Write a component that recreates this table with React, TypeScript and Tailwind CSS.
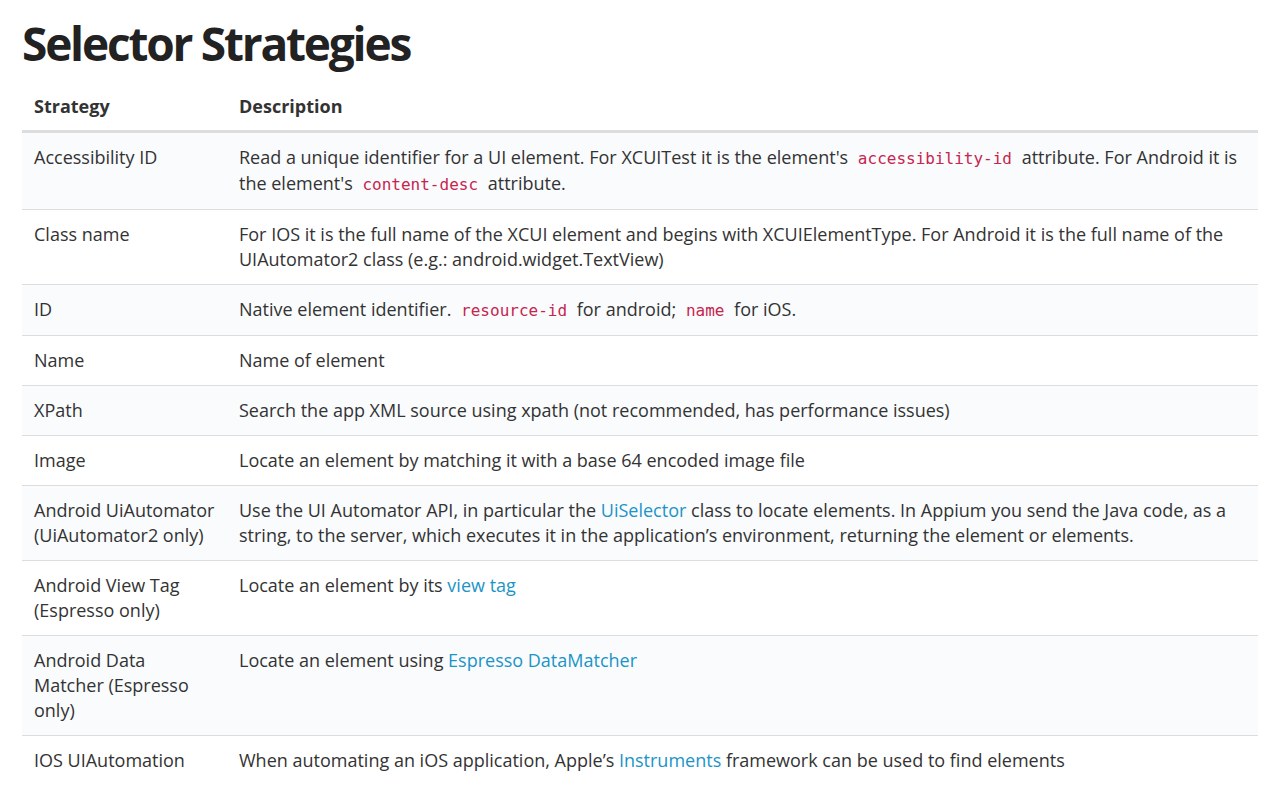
const rows: { name: string; desc: React.ReactNode }[] = [
  {
    name: "Accessibility ID",
    desc: (
      <>
        Read a unique identifier for a UI element. For XCUITest it is the element's{" "}
        <Code>accessibility-id</Code> attribute. For Android it is the element's{" "}
        <Code>content-desc</Code> attribute.
      </>
    ),
  },
  {
    name: "Class name",
    desc: "For IOS it is the full name of the XCUI element and begins with XCUIElementType. For Android it is the full name of the UIAutomator2 class (e.g.: android.widget.TextView)",
  },
  {
    name: "ID",
    desc: (
      <>
        Native element identifier. <Code>resource-id</Code> for android;{" "}
        <Code>name</Code> for iOS.
      </>
    ),
  },
  { name: "Name", desc: "Name of element" },
  {
    name: "XPath",
    desc: "Search the app XML source using xpath (not recommended, has performance issues)",
  },
  { name: "Image", desc: "Locate an element by matching it with a base 64 encoded image file" },
  {
    name: "Android UiAutomator (UiAutomator2 only)",
    desc: (
      <>
        Use the UI Automator API, in particular the <A>UiSelector</A> class to locate
        elements. In Appium you send the Java code, as a string, to the server, which
        executes it in the application’s environment, returning the element or elements.
      </>
    ),
  },
  {
    name: "Android View Tag (Espresso only)",
    desc: (
      <>
        Locate an element by its <A>view tag</A>
      </>
    ),
  },
  {
    name: "Android Data Matcher (Espresso only)",
    desc: (
      <>
        Locate an element using <A>Espresso DataMatcher</A>
      </>
    ),
  },
  {
    name: "IOS UIAutomation",
    desc: (
      <>
        When automating an iOS application, Apple’s <A>Instruments</A> framework can be
        used to find elements
      </>
    ),
  },
];

function Code({ children }: { children: React.ReactNode }) {
  return (
    <code className="px-[5px] font-['DejaVu_Sans_Mono',monospace] text-[16px] text-[#c7254e]">
      {children}
    </code>
  );
}

function A({ children }: { children: React.ReactNode }) {
  return <a className="text-[#1b94c7]">{children}</a>;
}

export default function App() {
  return (
    <div className="min-h-[799px] bg-white px-[22px] pt-[13px] font-['Open_Sans',sans-serif] text-[#333]">
      <h1 className="text-[46px] font-bold leading-[60px] tracking-[-2.2px] text-[#222]">
        Selector Strategies
      </h1>
      <table className="mt-[9px] w-[1236px] border-collapse text-[18px] leading-[25px]">
        <thead>
          <tr className="border-b-[3px] border-[#ddd]">
            <th className="w-[205px] px-3 pt-[12px] pb-[11px] text-left font-bold">Strategy</th>
            <th className="px-3 pt-[12px] pb-[11px] text-left font-bold">Description</th>
          </tr>
        </thead>
        <tbody>
          {rows.map((row, i) => (
            <tr
              key={row.name}
              className={
                i % 2 === 0
                  ? "border-b border-[#ddd] bg-[#f9fbfd]"
                  : "border-b border-[#ddd] bg-white last:border-0"
              }
            >
              <td className="px-3 py-3 align-top">{row.name}</td>
              <td className="px-3 py-3 align-top">{row.desc}</td>
            </tr>
          ))}
        </tbody>
      </table>
    </div>
  );
}
